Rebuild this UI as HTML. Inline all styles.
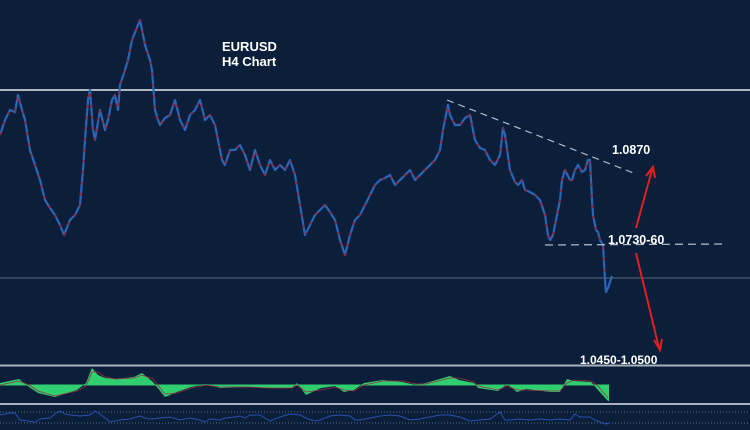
<!DOCTYPE html>
<html><head><style>
html,body{margin:0;padding:0;background:#0b1f3a;width:750px;height:430px;overflow:hidden}
svg{display:block}
text{font-family:"Liberation Sans",sans-serif;font-weight:bold;fill:#fff}
</style></head><body>
<svg width="750" height="430" viewBox="0 0 750 430" xmlns="http://www.w3.org/2000/svg">
<rect width="750" height="430" fill="#0b1f3a"/>
<line x1="0" y1="90" x2="750" y2="90" stroke="#e6e6ea" stroke-width="1.5"/>
<line x1="0" y1="278" x2="750" y2="278" stroke="#5a6a80" stroke-width="1"/>
<g fill="none" stroke-linejoin="round">
<polyline stroke="#2a66b8" stroke-width="2.2" points="0,135 5,120 10,110 15,112 18,95 22,110 25,120 30,150 35,165 40,180 45,200 50,208 55,215 60,225 64,235 70,220 75,215 80,205 83,170 85,140 88,100 90,90 93,130 95,140 100,110 105,130 108,120 112,100 115,95 118,110 120,85 125,70 128,60 132,40 136,30 140,20 143,35 145,45 150,60 152,70 155,110 158,120 160,125 165,118 170,115 175,100 180,120 185,130 190,115 195,110 200,100 205,120 210,115 215,125 218,140 222,160 225,165 230,150 235,150 240,145 245,155 250,170 255,150 260,165 265,175 270,160 275,170 280,165 285,170 290,160 295,175 300,205 305,235 310,225 315,215 320,210 325,205 330,212 335,220 340,240 345,255 350,235 355,220 360,215 365,205 370,195 375,185 380,180 385,178 390,175 395,185 400,180 405,175 410,170 415,180 420,175 425,170 430,165 435,160 440,150 443,130 445,120 448,105 450,115 455,125 460,125 465,118 470,115 473,130 475,140 480,148 485,150 490,160 495,165 500,155 503,128 505,135 510,170 515,182 518,185 522,180 525,190 530,192 535,195 540,200 545,215 548,235 550,240 553,235 555,225 558,210 560,200 562,180 565,170 570,180 572,180 575,170 578,165 582,172 585,170 588,160 590,160 592,200 593,215 596,230 598,232 600,240 603,245 605,280 606,292 608,288 610,282 612,276"/>
<polyline stroke="#8a2a4a" stroke-width="2" stroke-dasharray="3 8" points="0,135 5,120 10,110 15,112 18,95 22,110 25,120 30,150 35,165 40,180 45,200 50,208 55,215 60,225 64,235 70,220 75,215 80,205 83,170 85,140 88,100 90,90 93,130 95,140 100,110 105,130 108,120 112,100 115,95 118,110 120,85 125,70 128,60 132,40 136,30 140,20 143,35 145,45 150,60 152,70 155,110 158,120 160,125 165,118 170,115 175,100 180,120 185,130 190,115 195,110 200,100 205,120 210,115 215,125 218,140 222,160 225,165 230,150 235,150 240,145 245,155 250,170 255,150 260,165 265,175 270,160 275,170 280,165 285,170 290,160 295,175 300,205 305,235 310,225 315,215 320,210 325,205 330,212 335,220 340,240 345,255 350,235 355,220 360,215 365,205 370,195 375,185 380,180 385,178 390,175 395,185 400,180 405,175 410,170 415,180 420,175 425,170 430,165 435,160 440,150 443,130 445,120 448,105 450,115 455,125 460,125 465,118 470,115 473,130 475,140 480,148 485,150 490,160 495,165 500,155 503,128 505,135 510,170 515,182 518,185 522,180 525,190 530,192 535,195 540,200 545,215 548,235 550,240 553,235 555,225 558,210 560,200 562,180 565,170 570,180 572,180 575,170 578,165 582,172 585,170 588,160 590,160 592,200 593,215 596,230 598,232 600,240 603,245 605,280"/>
</g>
<line x1="447" y1="100" x2="636" y2="174" stroke="#b8bfcc" stroke-width="1.2" stroke-dasharray="7 5"/>
<line x1="545" y1="245" x2="727" y2="244" stroke="#b8bfcc" stroke-width="1.2" stroke-dasharray="8 5"/>
<g stroke="#e02020" stroke-width="2" fill="none">
<line x1="636" y1="228" x2="652" y2="170"/>
<polyline points="646,176 653,167 655,178"/>
<line x1="636" y1="253" x2="659" y2="348"/>
<polyline points="654,340 660,350 662,339"/>
</g>
<text x="222" y="51" font-size="13">EURUSD</text>
<text x="222" y="66" font-size="13">H4 Chart</text>
<text x="612" y="154" font-size="12.5">1.0870</text>
<text x="608" y="244" font-size="12.5">1.0730-60</text>
<text x="580" y="364" font-size="12">1.0450-1.0500</text>
<line x1="0" y1="365.5" x2="750" y2="365.5" stroke="#a8b0bc" stroke-width="2"/>
<line x1="0" y1="404" x2="750" y2="404" stroke="#a8b0bc" stroke-width="2"/>
<path fill="#2fcf70" d="M0,385 L0,383 19,379 29,387 38,393 55,397 77,390 86,383 92,368 98,375 105,378 115,379 134,377 142,373 153,382 165,397 177,392 191,387 206,384 220,388 249,387 268,388 292,388 297,383 306,395 321,388 335,386 344,392 354,390 364,383 383,380 402,382 416,385 426,383 450,376 459,380 474,383 478,388 498,391 507,384 517,392 526,389 550,392 560,392 567,379 574,381 591,382 598,390 608,401 609,401 609,385 Z"/>
<line x1="0" y1="385" x2="609" y2="385" stroke="#2fcf70" stroke-width="1"/>
<polyline fill="none" stroke="#9a3040" stroke-width="0.8" points="0,385 19,381 29,385 38,391 55,396 77,391 86,386 92,372 98,372 105,377 115,379 134,378 142,375 153,379 165,394 177,393 191,388 206,385 220,387 249,387 268,388 292,388 297,385 306,392 321,390 335,387 344,390 354,391 364,385 383,381 402,381 416,384 426,384 450,378 459,378 474,382 478,386 498,390 507,386 517,390 526,390 550,391 560,391 567,383 574,380 591,381 598,386 608,398"/>
<line x1="0" y1="412" x2="750" y2="412" stroke="#5a6a80" stroke-width="1" stroke-dasharray="1 2"/>
<line x1="0" y1="423" x2="750" y2="423" stroke="#5a6a80" stroke-width="1" stroke-dasharray="1 2"/>
<polyline fill="none" stroke="#2a50b0" stroke-width="1" points="0,415 10,413 15,413 20,420 35,422 40,419 50,418 55,414 60,411 65,414 70,415 80,416 90,415 95,411 100,414 110,422 120,420 130,419 140,416 145,418 150,419 160,418 170,417 180,420 190,418 200,420 205,422 210,419 220,420 225,418 235,417 240,416 245,418 250,415 260,415 265,418 270,421 280,417 290,414 300,415 308,419 315,421 320,420 330,416 340,415 350,416 355,420 360,420 370,418 380,416 390,415 400,416 410,420 420,419 430,417 440,415 450,415 460,417 465,419 470,421 480,420 490,419 500,412 505,420 510,420 520,419 530,420 540,419 550,420 560,419 570,420 575,414 580,417 590,417 595,420 600,422 605,424 610,423"/>
</svg>
</body></html>
